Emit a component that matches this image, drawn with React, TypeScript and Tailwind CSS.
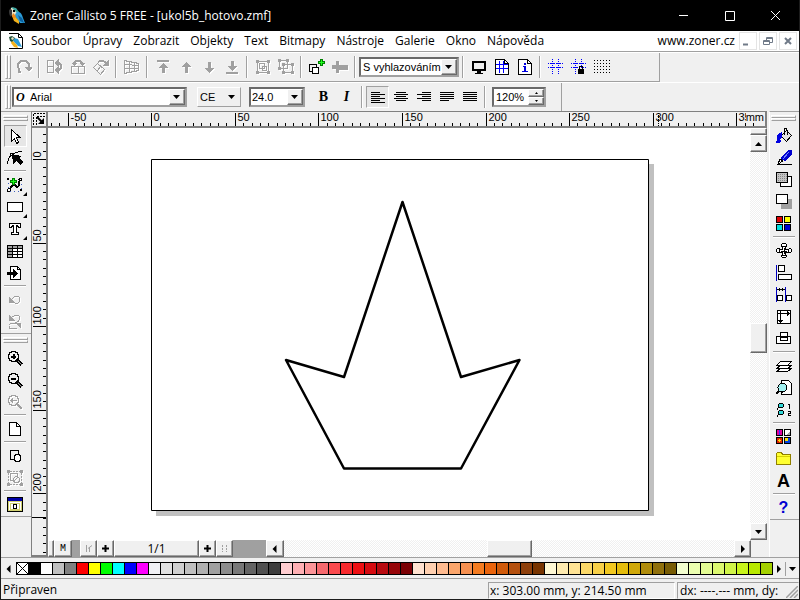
import React, { useEffect, useState } from "react";

type IconName = keyof typeof icons;

const GRAY = "#a0a0a0";

// Small 16x16 toolbar drawings
const icons = {
  rotate: (
    <g fill="none" stroke={GRAY} strokeWidth="2">
      <path d="M5 13H3V10Q2 8 2 7q0-5 5.500-5T13 7v2" />
      <path d="M9 8h8l-4 5z" fill={GRAY} stroke="none" />
    </g>
  ),
  mirrorH: (
    <g fill="none" stroke={GRAY}>
      <path d="M.5 1.500h6v12h-6zM1 7.500h5" />
      <path d="M9 4h2q3 0 3 3.500T11 11H9" strokeWidth="2" />
      <path d="M7.500 4l4-4v8zM7.500 11l4-4v8z" fill={GRAY} stroke="none" />
    </g>
  ),
  mirrorV: (
    <g fill="none" stroke={GRAY}>
      <path d="M1.500 7.500h13v7h-13zM8.500 8v6" />
      <path d="M4 5V3.500Q5 2 8 2t4 1.500V5" strokeWidth="2" />
      <path d="M1 4h6l-3 3zM9 4h6l-3 3z" fill={GRAY} stroke="none" />
    </g>
  ),
  rotateObj: (
    <g fill="none" stroke={GRAY}>
      <path d="M.5 8.500l4-4 7 6-4 5zM4 12l4-5" />
      <path d="M5 3q5-3 9 2" strokeWidth="2" />
      <path d="M9 7h7V0z" fill={GRAY} stroke="none" />
    </g>
  ),
  perspective: (
    <g fill="none" stroke={GRAY}>
      <path d="M0 1.500l15 3M0 5.500l15 1M0 9.500h15M0 14.500l15-3M.5 1.500v13M5.500 2v12M10.500 3v10M14.500 4v8" />
    </g>
  ),
  toFront: <path d="M2 1h12v2H2zM8 4l5 5H9.500v5h-3V9H3z" fill={GRAY} />,
  forward: <path d="M8 3l5 5H9.500v6h-3V8H3z" fill={GRAY} />,
  backward: <path d="M8 14L3 9h3.500V3h3v6H13z" fill={GRAY} />,
  toBack: <path d="M2 13h12v2H2zM8 12L3 7h3.500V2h3v5H13z" fill={GRAY} />,
  group: (
    <g fill="none" stroke={GRAY}>
      <path d="M2.500 2.500h11v11h-11zM4.500 4.500h5v5h-5zM7.500 7.500h4v4h-4z" />
      <path d="M1 1h3v3H1zM12 1h3v3h-3zM1 12h3v3H1zM12 12h3v3h-3z" fill={GRAY} stroke="none" />
    </g>
  ),
  ungroup: (
    <g fill="none" stroke={GRAY}>
      <path d="M1.500 1.500h8v8h-8zM5.500 5.500h9v8h-9z" />
      <path d="M0 0h3v3H0zM8 0h3v3H8zM0 8h3v3H0zM4 4h3v3H4zM13 4h3v3h-3zM4 12h3v3H4zM13 12h3v3h-3z" fill={GRAY} stroke="none" />
    </g>
  ),
  addObj: (
    <g stroke="#000" fill="none">
      <path d="M.5 5.500h7v7h-7z" />
      <path d="M3.500 8.500h6v6h-6z" fill="#fff" />
      <path d="M11 0h3v2h2v3h-2v2h-3V5H9V2h2z" fill="#008000" stroke="none" />
      <path d="M12 1h1v2h2v1h-2v2h-1V4h-2V3h2z" fill="#20ff20" stroke="none" />
    </g>
  ),
  addOff: <path d="M0 6h4V2h3v4h9v5H7v3H4v-4H0z" fill={GRAY} />,
  monitor: (
    <g stroke="#000" fill="none">
      <path d="M2 3h12v8H2z" strokeWidth="2" />
      <path d="M6 12h4v2h2v1H4v-1h2z" fill="#000" stroke="none" />
    </g>
  ),
  pageGrid: (
    <g fill="none">
      <path d="M1.500.500h9l4 4v11h-13z" fill="#fff" stroke="#000" />
      <path d="M5.500 2v12M9.500 2v12M2 5.500h12M2 9.500h12" stroke="#0000ff" />
      <path d="M10.500.500v4h4" stroke="#000" />
    </g>
  ),
  pageInfo: (
    <g fill="none">
      <path d="M1.500.500h9l4 4v11h-13z" fill="#fff" stroke="#000" />
      <path d="M10.500.500v4h4" stroke="#000" />
      <path d="M7 4h2v2H7zM6 7h3v5h2v1H5v-1h2V8H6z" fill="#0000e0" />
    </g>
  ),
  grid: (
    <g stroke="#0000ff" fill="none">
      <path d="M0 4.500h16M0 8.500h16M4.500 0v16M10.500 0v16" strokeDasharray="1 1" />
      <path d="M3 4.500h3M9 4.500h3M3 8.500h3M9 8.500h3" />
    </g>
  ),
  gridLock: (
    <g stroke="#0000ff" fill="none">
      <path d="M0 4.500h16M0 8.500h16M4.500 0v16M10.500 0v7" strokeDasharray="1 1" />
      <path d="M3 4.500h3M9 4.500h3M3 8.500h3" />
      <path d="M8.500 10.500v-3h3v3" stroke="#000" />
      <path d="M7 10h6v5H7z" fill="#000" stroke="none" />
    </g>
  ),
  dots: (
    <path
      d="M0 1.500h16M0 4.500h16M0 7.500h16M0 10.500h16M0 13.500h16"
      stroke="#000"
      strokeDasharray="1 2"
    />
  ),
  alignLeft: <path d="M1 3.500h9M1 5.500h14M1 7.500h9M1 9.500h14M1 11.500h9M1 13.500h14" stroke="#000" />,
  alignCenter: <path d="M3 3.500h10M1 5.500h14M3 7.500h10M1 9.500h14M3 11.500h10" stroke="#000" />,
  alignRight: <path d="M6 3.500h9M1 5.500h14M6 7.500h9M1 9.500h14M6 11.500h9" stroke="#000" />,
  justify: <path d="M1 3.500h14M1 5.500h14M1 7.500h14M1 9.500h14M1 11.500h9" stroke="#000" />,
  justifyAll: <path d="M1 3.500h14M1 5.500h14M1 7.500h14M1 9.500h14M1 11.500h14" stroke="#000" />,
  pointer: <path d="M4.500 1.500v12l3-3 2 5 2-1-2-5h3.500z" fill="#fff" stroke="#000" />,
  node: (
    <g fill="none" stroke="#000">
      <path d="M.5 14Q1 2 15.500 1.500" />
      <path d="M5 4l9 2-2 2 4 4-3 3-4-4-3 3z" fill="#000" stroke="none" />
      <path d="M3.500 3.500h2v2h-2z" fill="#fff" />
    </g>
  ),
  curve: (
    <g fill="none" stroke="#000">
      <path d="M2 13L5 9q3-3 4 0t3-1V4" strokeWidth="2" />
      <path d="M1.500 2v12M14.500 7v8M3 14.500h11" stroke="#4060c0" strokeDasharray="1 3" />
      <circle cx="2" cy="13" r="1.500" fill="#fff" />
      <circle cx="13.500" cy="2.500" r="1.500" fill="#fff" />
      <path d="M5 1h3v2h2v3H8v2H5V6H3V3h2z" fill="#008000" stroke="none" />
      <path d="M6 2h1v2h2v1H7v2H6V5H4V4h2z" fill="#20ff20" stroke="none" />
      <path d="M0 1h2v2H0zM13 12h2v2h-2z" fill="#000" stroke="none" />
    </g>
  ),
  rect: <path d="M.5 3.500h15v9H.5z" fill="#fff" stroke="#000" />,
  text: (
    <path
      d="M2.500 2.500h11v4h-2l-1-2H9.500v7h2v2h-7v-2h2v-7H5.500l-1 2h-2z"
      fill="#fff"
      stroke="#000"
    />
  ),
  table: (
    <g>
      <path d="M0 2h16v12H0z" fill="#fff" />
      <path d="M0 2h16v3H0zM0 2h5v12H0z" fill="#a0a0a0" />
      <path d="M.5 2.500h15v12H.5zM0 5.500h16M0 8.500h16M0 11.500h16M5.500 2v12M10.500 2v12" fill="none" stroke="#000" />
    </g>
  ),
  importDoc: (
    <g>
      <path d="M3.500 1.500h7l3 3v10h-10z" fill="#fff" stroke="#000" />
      <path d="M10.500 1.500v3h3" fill="none" stroke="#000" />
      <path d="M0 7h6V4l5 4.500L6 13v-3H0z" fill="#000" />
    </g>
  ),
  undo: (
    <g fill="none" stroke={GRAY}>
      <path d="M4 8q3-4 6-4 3 .5 3 4 0 2-3 3.500H8" />
      <path d="M2 5v6h6z" fill={GRAY} stroke="none" />
    </g>
  ),
  redoAll: (
    <g fill="none" stroke={GRAY}>
      <path d="M4 4q4-4 8-2 2 4-2 6H8M9 9.500H4Q1 10 2.500 14H10" />
      <path d="M2 1v6h6zM8 9h6v6z" fill={GRAY} stroke="none" />
    </g>
  ),
  zoomIn: (
    <g fill="none" stroke="#000">
      <circle cx="6.500" cy="6.500" r="5" strokeWidth="1.500" />
      <path d="M4 6.500h5M6.500 4v5" strokeWidth="2" />
      <path d="M10 10l5 5" strokeWidth="3" />
      <path d="M11 11l4 4" stroke="#a0a0a0" />
    </g>
  ),
  zoomOut: (
    <g fill="none" stroke="#000">
      <circle cx="6.500" cy="6.500" r="5" strokeWidth="1.500" />
      <path d="M4 6.500h5" strokeWidth="2" />
      <path d="M10 10l5 5" strokeWidth="3" />
      <path d="M11 11l4 4" stroke="#a0a0a0" />
    </g>
  ),
  zoomBack: (
    <g fill="none" stroke={GRAY}>
      <circle cx="6.500" cy="6.500" r="5" strokeWidth="1.500" />
      <path d="M4 6.500h6" strokeWidth="1.500" />
      <path d="M3 6.500l3-2.500v5z" fill={GRAY} stroke="none" />
      <path d="M10 10l5 5" strokeWidth="2" />
    </g>
  ),
  page: (
    <g fill="#fff" stroke="#000">
      <path d="M2.500 1.500h7l4 4v9h-11z" />
      <path d="M9.500 1.500v4h4" fill="none" />
    </g>
  ),
  shapes: (
    <g fill="none" stroke="#000">
      <path d="M3.500 2.500h8v6l-3 3h-5z" />
      <circle cx="10.500" cy="10" r="3.500" fill="#fff" />
    </g>
  ),
  shapesOff: (
    <g fill="none" stroke={GRAY}>
      <path d="M3 1.500h10M1.500 3v10M14.500 3v10M3 14.500h10" strokeDasharray="2 1" />
      <path d="M3.500 3.500h7v4l-3 3h-4z" />
      <circle cx="9.500" cy="9.500" r="3" />
      <path d="M0 0h3v3H0zM13 0h3v3h-3zM0 13h3v3H0zM13 13h3v3h-3z" fill={GRAY} stroke="none" />
    </g>
  ),
  windowIcon: (
    <g>
      <path d="M.5.500h15v14H.5z" fill="#fff" stroke="#000" />
      <path d="M1 1h14v3H1z" fill="#0000a8" />
      <path d="M1.500 4.500h13v9h-13zM3.500 6.500h9v6h-9z" fill="none" stroke="#d0d070" />
      <path d="M6.500 7.500h3v4h-3z" fill="#fff" stroke="#000" />
    </g>
  ),
  fill: (
    <g>
      <path d="M5.500 7.500l5-5 5 5-5 6-5-5z" fill="#e4e4e4" stroke="#000" />
      <path d="M8.500 7V2q0-2 1.500-1.500T11 4v3" fill="none" stroke="#000" />
      <path d="M6 4L1 7v5l-1 3h4l1-2-1-2 2-2z" fill="#0000e0" />
    </g>
  ),
  pen: (
    <g>
      <path d="M12 0h4v4L9 11l-5-3z" fill="#0000d0" />
      <path d="M13 2L7 9" stroke="#7080ff" />
      <path d="M4 9l3 2-5 3z" fill="#fff" stroke="#000" />
      <path d="M1 14.500h15" stroke="#000" />
    </g>
  ),
  transparency: (
    <g>
      <path d="M4.500 4.500h11v10h-11z" fill="#fff" stroke="#000" />
      <path d="M.5.500h11v10H.5z" fill="#c4c4c4" stroke="#000" />
      <path d="M2 2.500h9M2 4.500h9M2 6.500h9M2 8.500h9" stroke="#888" strokeDasharray="1 1" />
    </g>
  ),
  shadow: (
    <g>
      <path d="M5 5h11v10H5z" fill="#a0a0a0" />
      <path d="M.5.500h11v9H.5z" fill="#fff" stroke="#000" />
    </g>
  ),
  colors: (
    <g stroke="#000">
      <path d="M.5.500h6v6h-6z" fill="#e00000" />
      <path d="M8.500.500h6v6h-6z" fill="#ffff00" />
      <path d="M.5 8.500h6v6h-6z" fill="#00e0e0" />
      <path d="M8.500 8.500h6v6h-6z" fill="#0000d0" />
    </g>
  ),
  move: (
    <g fill="#fff" stroke="#000">
      <path d="M5.500 3.500v-2l1-1h3l1 1v2M5.500 11.500v2l1 1h3l1-1v-2M3.500 5.500h-2l-1 1v2l1 1h2M12.500 5.500h2l1 1v2l-1 1h-2" />
      <path d="M6.500 3.500h3v3h3v3h-3v3h-3v-3h-3v-3h3z" />
      <path d="M8 5v6M5 8h6" fill="none" />
    </g>
  ),
  align: (
    <g fill="#fff" stroke="#000">
      <path d="M.5 0v16" stroke="#0000c0" />
      <path d="M2.500.500h6v6h-6zM2.500 9.500h13v5h-13z" />
    </g>
  ),
  distribute: (
    <g fill="#fff" stroke="#000">
      <path d="M.5 0v15M9.500 0v15" stroke="#0000c0" />
      <path d="M1.500 8.500h5v5h-5zM10.500 8.500h5v5h-5z" />
      <path d="M1 2.500h8M3.500 1v3M6.500 1v3" fill="none" />
    </g>
  ),
  resize: (
    <g fill="none" stroke="#000">
      <path d="M1.500 1.500h13v13h-13z" fill="#fff" />
      <path d="M4.500 1v12M2 4.500h11" />
      <path d="M2 11h5l-2.500 3zM11 2v5l3-2.500z" fill="#000" stroke="none" />
    </g>
  ),
  overlap: (
    <g fill="#fff" stroke="#000">
      <path d="M4.500 1.500h7v5h-7zM.5 5.500h14v7H.5z" />
      <path d="M4.500 5.500h7v4h-7z" fill="none" />
    </g>
  ),
  layers: (
    <g fill="#fff" stroke="#000">
      <path d="M.5 13.500l4-3h11l-4 3zM.5 10.500l4-3h11l-4 3zM.5 7.500l4-4h11l-4 4z" />
    </g>
  ),
  preview: (
    <g stroke="#000">
      <path d="M5.500.500h7l3 3v11h-10z" fill="#fff" />
      <circle cx="6.500" cy="7.500" r="4.500" fill="#a0f0f0" />
      <path d="M3 11l-3 3" strokeWidth="2" />
    </g>
  ),
  zoomNums: (
    <g stroke="#000" fill="#30d8d8">
      <circle cx="5" cy="3.500" r="2.500" />
      <circle cx="5" cy="10.500" r="2.500" />
      <path d="M3 5L1 7.500M3 12l-2 2.500M12 2.500h1.500v4M12 9.500h2.500v2H12v2h3" fill="none" />
    </g>
  ),
  gallery: (
    <g stroke="#000">
      <path d="M.5.500h6v6h-6z" fill="#e000a0" />
      <path d="M8.500.500h6v6h-6z" fill="#fff" />
      <path d="M.5 8.500h6v6h-6z" fill="#e02000" />
      <path d="M8.500 8.500h6v6h-6z" fill="#0040e0" />
      <path d="M3 1h1v5H3z" fill="#3030ff" stroke="none" />
      <path d="M10 6l4-4v4z" fill="#a0a0a0" stroke="none" />
      <path d="M3 10h1v3H3zM2 11h3v1H2zM9 9h3v3H9z" fill="#ffe000" stroke="none" />
    </g>
  ),
  folder: (
    <g stroke="#908000">
      <path d="M.5 13.500v-11l1-1h4l1 2h8v10z" fill="#ffff30" />
      <path d="M1 5.500h13" stroke="#d8d000" />
    </g>
  ),
};

const Icon: React.FC<{ name: IconName; off?: boolean }> = ({ name, off }) => (
  <svg
    width="16"
    height="16"
    viewBox="0 0 16 16"
    shapeRendering="crispEdges"
    className={off ? "shrink-0 drop-shadow-[1px_1px_0_#ffffff]" : "shrink-0"}
    aria-hidden="true"
  >
    {icons[name]}
  </svg>
);

const Parrot: React.FC<{ className: string }> = ({ className }) => (
  <svg viewBox="0 0 18 18" className={className} aria-hidden="true">
    <path d="M8 5c4-1 6 2 7 6l2 5-5 0-6-8z" fill="#2b9bd6" />
    <path d="M10 8l4 3 2 5-4-2z" fill="#0b5f9c" />
    <path d="M5 7l6 7 0 3-5-3-2-5z" fill="#f2b21c" />
    <path d="M3 1c3-1 6 0 6 3l-2 4-3 1-2-4z" fill="#e9e3c8" />
    <path d="M3 0l5 1 3 4-3 0-3-3z" fill="#3aa6a0" />
    <path d="M1 4c0-2 2-2 3-1v4l-1 3C1 8 1 6 1 4z" fill="#383838" />
    <path d="M5 6l3 3-2 3-2-3z" fill="#f08a1a" />
    <path d="M5 3h2v2H5z" fill="#000" />
  </svg>
);

const Arrow: React.FC<{ dir: "up" | "down" | "left" | "right" }> = ({ dir }) => {
  const paths = {
    up: "M0 6L3.500 2 7 6z",
    down: "M0 2h7L3.500 6z",
    left: "M5.500 0v8L1.500 4z",
    right: "M2 0v8l4-4z",
  };
  return (
    <svg width="8" height="8" viewBox="0 0 8 8" aria-hidden="true" className="shrink-0">
      <path d={paths[dir]} />
    </svg>
  );
};

const raised =
  "flex items-center justify-center border border-t-white border-l-white border-r-[#696969] border-b-[#696969] bg-[#f0f0f0] shadow-[inset_-1px_-1px_0_#a0a0a0]";

const ToolButton: React.FC<{
  name: IconName;
  label: string;
  off?: boolean;
  active?: boolean;
  flyout?: boolean;
}> = ({ name, label, off, active, flyout }) => (
  <button
    type="button"
    aria-label={label}
    className={`relative flex h-[22px] w-[23px] shrink-0 items-center justify-center ${
      active
        ? "border border-t-[#a0a0a0] border-l-[#a0a0a0] border-r-white border-b-white bg-[#e6e6e6]"
        : ""
    }`}
  >
    <Icon name={name} off={off} />
    {flyout && (
      <svg width="4" height="4" viewBox="0 0 4 4" className="absolute right-0 bottom-0">
        <path d="M4 0v4H0z" />
      </svg>
    )}
  </button>
);

const Divider = () => (
  <div className="mx-[3px] h-[22px] w-[2px] shrink-0 border-l border-[#a0a0a0] bg-white" />
);

const RowDivider = () => (
  <div className="mt-[1px] mb-[2px] h-[2px] w-[22px] shrink-0 border-t border-[#a0a0a0] bg-white" />
);

const gripLine = "border border-t-white border-l-white border-r-[#a0a0a0] border-b-[#a0a0a0]";

const Grip = () => (
  <div className="mr-px ml-1 flex shrink-0">
    <div className={`h-6 w-[3px] ${gripLine}`} />
    <div className={`h-6 w-[3px] ${gripLine}`} />
  </div>
);

const RowGrip = () => (
  <div className="mt-[3px] mb-1 shrink-0">
    <div className={`h-[3px] w-[25px] ${gripLine}`} />
    <div className={`h-[3px] w-[25px] ${gripLine}`} />
  </div>
);

const Combo: React.FC<{
  label: string;
  value: string;
  width: string;
  pad?: string;
  prefix?: string;
  flat?: boolean;
}> = ({ label, value, width, pad = "pl-1", prefix, flat }) => (
  <div
    className={`relative flex h-5 shrink-0 items-center ${width} ${
      flat
        ? "border border-t-white border-l-white border-r-[#a0a0a0] border-b-[#a0a0a0] bg-[#f0f0f0]"
        : "border-2 border-t-[#696969] border-l-[#696969] border-r-[#a0a0a0] border-b-[#a0a0a0] bg-white"
    }`}
  >
    {prefix && (
      <span className="absolute left-[2px] font-['Liberation_Serif',serif] text-xs font-bold italic">
        {prefix}
      </span>
    )}
    <select
      aria-label={label}
      className={`h-full w-full appearance-none bg-transparent font-['Liberation_Sans',sans-serif] text-[11px] leading-4 outline-none ${pad}`}
    >
      <option>{value}</option>
    </select>
    <span
      className={`pointer-events-none absolute inset-y-0 right-0 w-4 ${
        flat ? "flex items-center justify-center" : raised
      }`}
    >
      <Arrow dir="down" />
    </span>
  </div>
);

const PX_PER_5MM = 8.355;

// Keeps the rulers as long as the window needs
const useWindowSize = () => {
  const [size, setSize] = useState({ width: window.innerWidth, height: window.innerHeight });

  useEffect(() => {
    const onResize = () => setSize({ width: window.innerWidth, height: window.innerHeight });
    window.addEventListener("resize", onResize);
    return () => window.removeEventListener("resize", onResize);
  }, []);

  return size;
};

const HorizontalRuler = () => {
  const { width } = useWindowSize();
  // x of the page origin inside the ruler strip
  const origin = 103.3;
  const count = Math.floor((width - 86) / PX_PER_5MM);
  return (
    <div className="relative h-4 min-w-0 flex-1 overflow-hidden border-r-2 border-b-2 border-[#808080] bg-[#f0f0f0]">
      <svg className="block h-full w-full" aria-hidden="true">
        {Array.from({ length: count }).map((_, i) => {
          const step = i - 12;
          const x = Math.round(origin + step * PX_PER_5MM) + 0.5;
          const major = step % 10 === 0;
          return (
            <g key={step}>
              <path d={major ? `M${x} 1v13` : `M${x} 11v3`} stroke="#000" />
              {major && (
                <text
                  x={x + 2}
                  y="9"
                  className="font-['Liberation_Sans',sans-serif] text-[11px]"
                >
                  {step * 5}
                </text>
              )}
            </g>
          );
        })}
        <path d="M610.500 1v13" stroke="#000" strokeDasharray="1 1" />
      </svg>
      <span className="absolute top-0 right-0 bg-[#f0f0f0] pr-px font-['Liberation_Sans',sans-serif] text-[11px] leading-[11px]">
        mm
      </span>
    </div>
  );
};

const VerticalRuler = () => {
  const { height } = useWindowSize();
  const origin = 31;
  const count = Math.floor((height - 172) / PX_PER_5MM);
  return (
    <div className="w-[17px] shrink-0 overflow-hidden border-r-2 border-b-2 border-l border-[#808080] bg-[#f0f0f0]">
      <svg className="block h-full w-full" aria-hidden="true">
        {Array.from({ length: count }).map((_, i) => {
          const step = i - 3;
          const y = Math.round(origin + step * PX_PER_5MM) + 0.5;
          const major = step % 10 === 0;
          return (
            <g key={step}>
              <path d={major ? `M1 ${y}h13` : `M11 ${y}h3`} stroke="#000" />
              {major && (
                <text
                  transform={`translate(9 ${y - 2}) rotate(-90)`}
                  className="font-['Liberation_Sans',sans-serif] text-[11px]"
                >
                  {step * 5}
                </text>
              )}
            </g>
          );
        })}
        <path d="M0 389.500h14" stroke="#000" />
      </svg>
    </div>
  );
};

const Drawing = () => (
  <svg className="block min-h-0 min-w-0 flex-1 bg-white" role="img" aria-label="ukol5b_hotovo.zmf">
    <path d="M108 36h498v352H108z" fill="#c0c0c0" />
    <path d="M103.500 31.500h497v351h-497z" fill="#fff" stroke="#000" />
    <path
      d="M354.500 74L413 249l58.500-17L413 340.500H296L238 232l58 17z"
      fill="none"
      stroke="#000"
      strokeWidth="2.500"
      strokeLinejoin="round"
    />
  </svg>
);

const TRACK =
  "bg-[#f8f8f8] bg-[repeating-conic-gradient(#f0f0f0_0_25%,#ffffff_0_50%)] bg-[length:2px_2px]";

const VerticalScroll = () => (
  <div className={`flex w-[17px] shrink-0 flex-col ${TRACK}`}>
    <div className={`h-[7px] shrink-0 ${raised}`} />
    <button type="button" aria-label="Nahoru" className={`h-[17px] shrink-0 ${raised}`}>
      <Arrow dir="up" />
    </button>
    <div className="flex-[171_1_0]" />
    <div className={`h-[30px] shrink-0 ${raised}`} />
    <div className="flex-[171_1_0]" />
    <button type="button" aria-label="Dolů" className={`h-[17px] shrink-0 ${raised}`}>
      <Arrow dir="down" />
    </button>
  </div>
);

const PageBar = () => (
  <div className="flex h-[17px] shrink-0">
    <div className={`w-[6px] shrink-0 ${raised}`} />
    <div className="flex w-[212px] shrink-0 bg-[#a0a0a0] text-[10px]">
      <button type="button" className={`mr-2 w-[18px] font-['Liberation_Mono',monospace] ${raised}`}>
        M
      </button>
      <button type="button" aria-label="První stránka" className={`w-[17px] text-[#a0a0a0] ${raised}`}>
        <svg width="8" height="8" viewBox="0 0 8 8">
          <path d="M1.500 0v7M4.500 7V2M3 3.500L7 .5" fill="none" stroke={GRAY} />
        </svg>
      </button>
      <button type="button" aria-label="Přidat stránku před" className={`w-[17px] ${raised}`}>
        <svg width="7" height="7" viewBox="0 0 7 7">
          <path d="M3.500 0v7M0 3.500h7" stroke="#000" strokeWidth="2" />
        </svg>
      </button>
      <div className={`w-[85px] font-['Open_Sans',sans-serif] text-xs ${raised}`}>1/1</div>
      <button type="button" aria-label="Přidat stránku za" className={`w-[17px] ${raised}`}>
        <svg width="7" height="7" viewBox="0 0 7 7">
          <path d="M3.500 0v7M0 3.500h7" stroke="#000" strokeWidth="2" />
        </svg>
      </button>
      <button type="button" aria-label="Poslední stránka" className={`w-[17px] ${raised}`}>
        <svg width="8" height="8" viewBox="0 0 8 8">
          <path d="M1.500 0v7M5.500 0v7" stroke={GRAY} strokeDasharray="2 1" />
        </svg>
      </button>
    </div>
    <div className={`flex min-w-0 flex-1 ${TRACK}`}>
      <button type="button" aria-label="Vlevo" className={`w-[18px] shrink-0 ${raised}`}>
        <Arrow dir="left" />
      </button>
      <div className="flex-1" />
      <div className={`w-[45px] shrink-0 ${raised}`} />
      <div className="flex-1" />
      <button type="button" aria-label="Vpravo" className={`w-[17px] shrink-0 ${raised}`}>
        <Arrow dir="right" />
      </button>
    </div>
    <div className="w-4 shrink-0 bg-[#f0f0f0]" />
  </div>
);

const menuItems = [
  "Soubor",
  "Úpravy",
  "Zobrazit",
  "Objekty",
  "Text",
  "Bitmapy",
  "Nástroje",
  "Galerie",
  "Okno",
  "Nápověda",
];

const swatches = [
  "#000000", "#ffffff", "#c0c0c0", "#808080", "#ff0000", "#ffff00", "#00ff00", "#00ffff", "#0000ff", "#ff00ff",
  "#f0f0f4", "#e0e0e0", "#d0d0d0", "#c0c0c0", "#b0b0b0", "#a0a0a0", "#8c8c8c", "#787878", "#646464", "#505050", "#3c3c3c",
  "#ffcdd0", "#ffb0b4", "#fb9498", "#f6696e", "#fa4a4e", "#f72a2e", "#ee0f12", "#d60a10", "#b80a10", "#960408", "#7a0004",
  "#ffe2d0", "#ffd0b0", "#ffbb90", "#fba66c", "#f69050", "#f57c20", "#ea640c", "#d05a0a", "#b4500e", "#8e400c", "#783400",
  "#fff8d4", "#ffebb0", "#ffe394", "#fbd868", "#f8d048", "#f2c820", "#e4bc0c", "#d0a80a", "#b08c0c", "#90700c", "#785c04",
  "#f4ffd0", "#ecffb0", "#e4fc94", "#dcf870", "#d0f448", "#c8f41c", "#b8e800", "#a4d000",
];

const MenuBar = () => (
  <div className="flex h-[21px] shrink-0 items-center border-b border-[#a0a0a0] bg-white pr-[2px] pl-[7px]">
    <svg width="16" height="16" viewBox="0 0 16 16" className="mr-[7px] shrink-0" aria-hidden="true">
      <path d="M1.500.500h9l4 4v11h-13z" fill="#fff" />
      <path d="M1 .5h9.500l4 4v11H1M10.500.500v4h4" fill="none" stroke="#000" />
      <path d="M6 5l4 1 4 8-4-1-5-5z" fill="#2b9bd6" />
      <path d="M4 7l5 5 1 3-4-1-3-4z" fill="#f2b21c" />
      <path d="M1 4l3-1 3 2-3 4-2-1z" fill="#205038" />
      <path d="M3 5l2-1 1 2-2 1z" fill="#e9e3c8" />
    </svg>
    <nav className="flex gap-[11px]">
      {menuItems.map((item) => (
        <button key={item} type="button">
          {item}
        </button>
      ))}
    </nav>
    <a href="#zoner" className="mr-1 ml-auto">
      www.zoner.cz
    </a>
    <div className="flex gap-[2px]">
      {["M3 11.500h5", "M6.500 7V4.500h6v5H10M3.500 7.500h6v4h-6zM3.500 8.500h6M6.500 5.500h6", "M5 5l6 6M11 5l-6 6"].map(
        (d, i) => (
          <button
            key={d}
            type="button"
            aria-label={["Minimalizovat dokument", "Obnovit dokument", "Zavřít dokument"][i]}
            className="flex h-[18px] w-[18px] items-center justify-center border border-[#e4e4e4]"
          >
            <svg width="16" height="16" viewBox="0 0 16 16">
              <path d={d} fill="none" stroke="#707a88" strokeWidth={i === 1 ? 1 : 2} />
            </svg>
          </button>
        )
      )}
    </div>
  </div>
);

const TitleBar = () => (
  <header className="flex h-[31px] shrink-0 items-center bg-black pl-[7px] text-white">
    <Parrot className="mr-1 size-[18px]" />
    <h1 className="min-w-0 flex-1 truncate">Zoner Callisto 5 FREE - [ukol5b_hotovo.zmf]</h1>
    {["M1 5.500h9", "M1.500 1.500h9v9h-9z", "M1 1l9 9M10 1l-9 9"].map((d, i) => (
      <button
        key={d}
        type="button"
        aria-label={["Minimalizovat", "Maximalizovat", "Zavřít"][i]}
        className="flex h-full w-[46px] items-center justify-center"
      >
        <svg width="12" height="12" viewBox="0 0 12 12">
          <path d={d} fill="none" stroke="#fff" />
        </svg>
      </button>
    ))}
  </header>
);

const StandardToolbar = () => (
  <div className="flex h-[30px] shrink-0 border-t border-white">
    <div className="flex w-[659px] items-center border-r border-b border-[#a0a0a0]">
      <Grip />
      <ToolButton name="rotate" label="Otočit" off />
      <Divider />
      <ToolButton name="mirrorH" label="Převrátit vodorovně" off />
      <ToolButton name="mirrorV" label="Převrátit svisle" off />
      <ToolButton name="rotateObj" label="Otočit o 90°" off />
      <Divider />
      <ToolButton name="perspective" label="Perspektiva" off />
      <Divider />
      <ToolButton name="toFront" label="Úplně dopředu" off />
      <ToolButton name="forward" label="Dopředu" off />
      <ToolButton name="backward" label="Dozadu" off />
      <ToolButton name="toBack" label="Úplně dozadu" off />
      <Divider />
      <ToolButton name="group" label="Seskupit" off />
      <ToolButton name="ungroup" label="Zrušit skupinu" off />
      <Divider />
      <ToolButton name="addObj" label="Přidat objekt" />
      <ToolButton name="addOff" label="Přidat" off />
      <Divider />
      <Combo label="Kvalita zobrazení" value="S vyhlazováním" width="w-[100px]" pad="pl-[2px]" />
      <Divider />
      <ToolButton name="monitor" label="Celá obrazovka" />
      <ToolButton name="pageGrid" label="Vlastnosti stránky" />
      <ToolButton name="pageInfo" label="Informace" />
      <Divider />
      <ToolButton name="grid" label="Vodítka" />
      <ToolButton name="gridLock" label="Zamknout vodítka" />
      <ToolButton name="dots" label="Mřížka" />
    </div>
  </div>
);

const TextToolbar = () => (
  <div className="flex h-[29px] shrink-0 border-t border-white">
    <div className="flex w-[561px] items-center border-r border-[#a0a0a0]">
      <Grip />
      <Combo label="Písmo" value="Arial" width="w-[175px]" pad="pl-4" prefix="O" />
      <div className="mr-2 ml-[10px] flex">
        <Combo label="Kódování" value="CE" width="w-[44px]" pad="pl-[2px]" flat />
      </div>
      <Combo label="Velikost" value="24.0" width="w-[56px]" pad="pl-[1px]" />
      <div className="ml-[7px] flex font-['Liberation_Serif',serif] text-sm font-bold">
        <button type="button" className="w-[23px]">
          B
        </button>
        <button type="button" className="w-[23px] italic">
          I
        </button>
      </div>
      <Divider />
      <ToolButton name="alignLeft" label="Zarovnat vlevo" active />
      <ToolButton name="alignCenter" label="Na střed" />
      <ToolButton name="alignRight" label="Zarovnat vpravo" />
      <ToolButton name="justify" label="Do bloku" />
      <ToolButton name="justifyAll" label="Do bloku vše" />
      <Divider />
      <div className="ml-[3px] flex h-5 w-[54px] border-2 border-t-[#696969] border-l-[#696969] border-r-[#a0a0a0] border-b-[#a0a0a0] bg-white">
        <input
          aria-label="Řádkování"
          defaultValue="120%"
          className="w-0 min-w-0 flex-1 pl-[2px] font-['Liberation_Sans',sans-serif] text-[11px] outline-none"
        />
        <div className="flex w-4 flex-col">
          <button type="button" aria-label="Zvýšit" className={`h-2 ${raised}`}>
            <svg width="3" height="2" viewBox="0 0 3 2">
              <path d="M0 2L1.500 0 3 2z" />
            </svg>
          </button>
          <button type="button" aria-label="Snížit" className={`h-2 ${raised}`}>
            <svg width="3" height="2" viewBox="0 0 3 2">
              <path d="M0 0h3L1.500 2z" />
            </svg>
          </button>
        </div>
      </div>
    </div>
  </div>
);

const LeftToolbox = () => (
  <aside className="flex w-[30px] shrink-0 flex-col border-t border-[#a0a0a0]">
    <div className="flex flex-col items-center border-b border-[#a0a0a0] pr-[2px]">
      <RowGrip />
      <ToolButton name="pointer" label="Výběr" active />
      <ToolButton name="node" label="Úprava tvaru" />
      <RowDivider />
      <ToolButton name="curve" label="Křivka" flyout />
      <ToolButton name="rect" label="Obdélník" flyout />
      <ToolButton name="text" label="Text" flyout />
      <ToolButton name="table" label="Tabulka" />
      <ToolButton name="importDoc" label="Import" />
      <RowDivider />
      <ToolButton name="undo" label="Zpět" off />
      <ToolButton name="redoAll" label="Znovu" off />
    </div>
    <div className="flex flex-col items-center border-b border-[#a0a0a0] pr-[2px]">
      <RowGrip />
      <ToolButton name="zoomIn" label="Přiblížit" />
      <ToolButton name="zoomOut" label="Oddálit" />
      <ToolButton name="zoomBack" label="Předchozí měřítko" off />
      <RowDivider />
      <ToolButton name="page" label="Celá stránka" />
      <RowDivider />
      <ToolButton name="shapes" label="Objekty" />
      <ToolButton name="shapesOff" label="Vybrané objekty" off />
      <RowDivider />
      <ToolButton name="windowIcon" label="Okno" />
    </div>
  </aside>
);

const RightToolbox = () => (
  <aside className="flex w-[30px] shrink-0 flex-col border-t border-l border-t-[#a0a0a0] border-l-white">
    <div className="flex flex-col items-center border-b border-[#a0a0a0] pr-[2px]">
      <RowGrip />
      <ToolButton name="fill" label="Výplň" />
      <ToolButton name="pen" label="Obrys" />
      <ToolButton name="transparency" label="Průhlednost" />
      <ToolButton name="shadow" label="Stín" />
      <ToolButton name="colors" label="Barvy" />
      <RowDivider />
      <ToolButton name="move" label="Transformace" />
      <ToolButton name="align" label="Zarovnání" />
      <ToolButton name="distribute" label="Rozmístění" />
      <ToolButton name="resize" label="Rozměry" />
      <ToolButton name="overlap" label="Tvarování" />
      <RowDivider />
      <ToolButton name="layers" label="Vrstvy" />
      <ToolButton name="preview" label="Náhled" />
      <ToolButton name="zoomNums" label="Pohledy" />
      <RowDivider />
      <ToolButton name="gallery" label="Galerie" />
      <ToolButton name="folder" label="Složka" />
      <button type="button" className="h-[22px] w-[23px] font-['Liberation_Sans',sans-serif] text-lg leading-[22px] font-bold">
        A
      </button>
      <RowDivider />
      <button type="button" className="h-[22px] w-[23px] font-['Liberation_Sans',sans-serif] text-base leading-[22px] font-bold text-[#0000d0]">
        ?
      </button>
    </div>
  </aside>
);

const Palette = () => (
  <div className="flex h-[21px] shrink-0 items-center border-t border-[#a0a0a0] pt-px">
    <button type="button" aria-label="Předchozí barvy" className="flex h-[14px] w-[15px] shrink-0 items-center justify-center">
      <Arrow dir="left" />
    </button>
    <div className="flex h-[13px] min-w-0 overflow-hidden border-l border-black">
      <button type="button" aria-label="Bez výplně" className="w-3 shrink-0 border-y border-r border-black bg-white">
        <svg width="11" height="11" viewBox="0 0 11 11">
          <path d="M0 0l11 11M11 0L0 11" stroke="#000" />
        </svg>
      </button>
      {swatches.map((color, index) => (
        <button
          key={index}
          type="button"
          aria-label={color}
          className="w-3 shrink-0 border-y border-r border-black"
          style={{ backgroundColor: color }}
        />
      ))}
    </div>
    <button type="button" aria-label="Další barvy" className="flex h-[14px] w-[13px] shrink-0 items-center justify-center border-r border-[#a0a0a0]">
      <Arrow dir="right" />
    </button>
    <button type="button" aria-label="Paleta" className="flex h-[14px] flex-1 items-center justify-center">
      <Arrow dir="down" />
    </button>
  </div>
);

const StatusBar = () => (
  <footer className="flex h-[21px] shrink-0 border-t border-[#a0a0a0] pt-[3px] leading-4">
    <div className="min-w-0 flex-1 pl-[2px]">Připraven</div>
    <div className="mr-[2px] w-[187px] border border-t-[#a0a0a0] border-l-[#a0a0a0] border-r-white border-b-white pl-px whitespace-nowrap">
      x: 303.00 mm, y: 214.50 mm
    </div>
    <div className="relative w-[122px] border border-t-[#a0a0a0] border-l-[#a0a0a0] border-transparent pl-[2px]">
      <div className="whitespace-nowrap">dx: ----.--- mm, dy:</div>
      <svg width="12" height="12" viewBox="0 0 12 12" className="absolute right-0 bottom-0">
        <path d="M0 12L12 0M4 12l8-8M8 12l4-4" stroke="#a0a0a0" strokeWidth="1.500" />
      </svg>
    </div>
  </footer>
);

const App: React.FC = () => {
  return (
    <div className="flex h-screen flex-col overflow-hidden border-r border-b border-l border-[#1c1c1c] bg-[#f0f0f0] font-['Open_Sans','Noto_Sans',sans-serif] text-xs text-black">
      <TitleBar />
      <MenuBar />
      <StandardToolbar />
      <TextToolbar />
      <main className="flex min-h-0 flex-1">
        <LeftToolbox />
        <section className="mr-[2px] flex min-w-0 flex-1 flex-col border-t border-[#808080]">
          <div className="flex shrink-0">
            <button
              type="button"
              aria-label="Počátek pravítek"
              className="flex h-4 w-[17px] shrink-0 items-center justify-center border-r-2 border-b-2 border-l border-[#808080]"
            >
              <svg width="12" height="12" viewBox="0 0 12 12">
                <path d="M.5 12V.5H12M3.500 12V3.500H12" fill="none" stroke="#000" strokeDasharray="2 1" />
                <path d="M4 4l5 5" stroke="#000" strokeWidth="2" />
                <path d="M11 5v6H5z" />
              </svg>
            </button>
            <HorizontalRuler />
          </div>
          <div className="flex min-h-0 flex-1">
            <VerticalRuler />
            <div className="flex min-w-0 flex-1 flex-col">
              <div className="flex min-h-0 flex-1">
                <Drawing />
                <VerticalScroll />
              </div>
              <PageBar />
            </div>
          </div>
        </section>
        <RightToolbox />
      </main>
      <Palette />
      <StatusBar />
    </div>
  );
};

export default App;
